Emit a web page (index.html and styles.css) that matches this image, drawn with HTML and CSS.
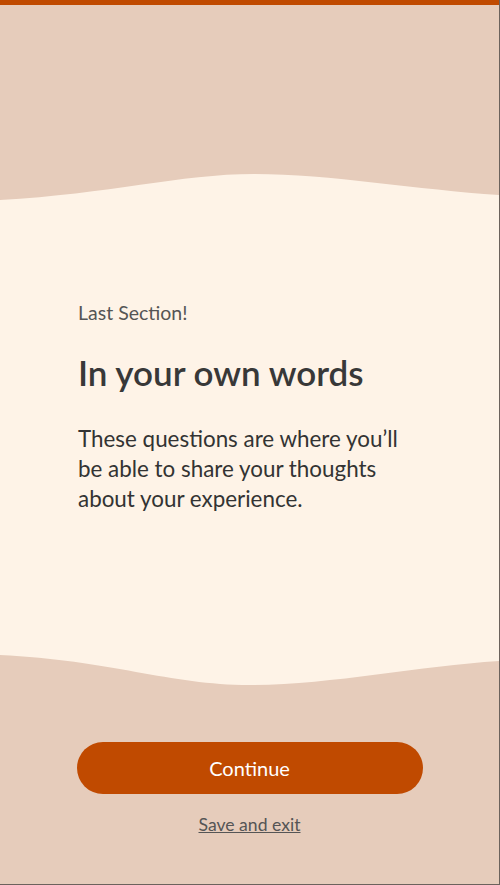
FILE: index.html
```html
<!DOCTYPE html>
<html lang="en">
<head>
<meta charset="utf-8">
<title>In your own words</title>
<link rel="stylesheet" href="styles.css">
</head>
<body>
<div class="screen">
  <div class="top"></div>
  <svg class="wave" viewBox="0 0 500 32" preserveAspectRatio="none" aria-hidden="true">
    <path d="M0 30 C 110 24, 180 4, 255 4 C 330 4, 420 20, 500 25 L500 32 L0 32 Z" fill="#fef3e7"/>
  </svg>
  <main class="content">
    <p class="eyebrow">Last Section!</p>
    <h1 class="title">In your own words</h1>
    <p class="body">These questions are where you’ll be able to share your thoughts about your experience.</p>
  </main>
  <svg class="wave wave-bottom" viewBox="0 0 500 38" preserveAspectRatio="none" aria-hidden="true">
    <path d="M0 0 L500 0 L500 9 C 420 14, 330 33, 250 33 C 170 33, 110 8, 0 3 Z" fill="#fef3e7"/>
  </svg>
  <footer class="footer">
    <button class="btn">Continue</button>
    <a class="link" href="#">Save and exit</a>
  </footer>
</div>
</body>
</html>
```
FILE: styles.css
```css
html, body {
  margin: 0;
  padding: 0;
}
body {
  background: #e6ccbb;
  font-family: Lato, "Open Sans", sans-serif;
}
.screen {
  width: 500px;
  height: 885px;
  box-sizing: border-box;
  background: #e6ccbb;
  border-right: 1px solid #6b625c;
  border-bottom: 1px solid #6b625c;
  display: flex;
  flex-direction: column;
  overflow: hidden;
}
.top {
  height: 170px;
  box-sizing: border-box;
  border-top: 5px solid #c04a00;
  flex: none;
}
.wave {
  display: block;
  width: 100%;
  height: 32px;
  flex: none;
}
.wave-bottom {
  height: 38px;
}
.content {
  height: 450px;
  flex: none;
  background: #fef3e7;
  box-sizing: border-box;
  padding: 99px 78px 0 78px;
}
.eyebrow {
  margin: 0;
  font-size: 19.5px;
  line-height: 24px;
  color: #555;
}
.title {
  margin: 27px 0 0 0;
  font-size: 35px;
  line-height: 40px;
  font-weight: 600;
  color: #383838;
}
.body {
  margin: 32px 0 0 0;
  font-size: 22.4px;
  line-height: 30px;
  color: #333;
  max-width: 340px;
}
.footer {
  flex: 1;
  display: flex;
  flex-direction: column;
  align-items: center;
  padding-top: 52px;
}
.btn {
  width: 346px;
  height: 52px;
  border: none;
  border-radius: 26px;
  background: #c04a00;
  color: #fff;
  font-family: inherit;
  font-size: 20px;
}
.link {
  margin-top: 20px;
  font-size: 17.6px;
  line-height: 22px;
  color: #555;
  text-decoration: underline;
}
```
